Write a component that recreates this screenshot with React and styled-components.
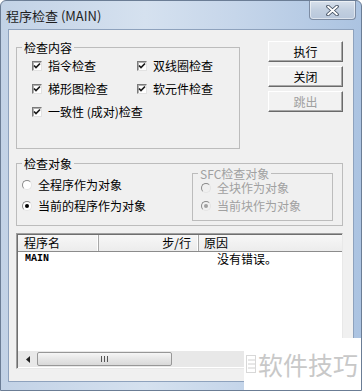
import React from 'react';
import styled, {createGlobalStyle} from 'styled-components';

const GlobalStyle = createGlobalStyle`
    html, body {
        margin: 0;
        padding: 0;
        background: #fff;
    }
    body {
        font-family: "Noto Sans CJK SC", "Liberation Sans", sans-serif;
        font-size: 12px;
        color: #000;
    }
    * {
        box-sizing: border-box;
    }
`;

const Window = styled.div`
    position: relative;
    width: 362px;
    height: 391px;
    display: flex;
    flex-direction: column;
    padding: 0 7px 8px 7px;
    border: 1px solid #6b7d95;
    border-radius: 6px 6px 0 0;
    background: linear-gradient(90deg, #c2d2e6 0%, #d5e1ef 40%, #c6d6ea 65%, #abc3e1 100%);
    overflow: hidden;
`;

const TitleBar = styled.div`
    height: 28px;
    margin: 0 -2px;
    display: flex;
    justify-content: space-between;
    align-items: flex-start;
    flex: none;
`;

const Title = styled.div`
    margin-top: 7px;
    font-size: 13px;
    line-height: 16px;
    color: #1e1e1e;
`;

const CloseButton = styled.div`
    width: 47px;
    height: 19px;
    display: flex;
    align-items: center;
    justify-content: center;
    border: 1px solid #7d8ca3;
    border-top: none;
    border-radius: 0 0 4px 4px;
    background: linear-gradient(#d8e1ec, #c2cfe0 50%, #b8c7db);
    box-shadow: inset 0 0 0 1px rgba(255, 255, 255, 0.5);
`;

const Client = styled.div`
    flex: 1;
    display: flex;
    flex-direction: column;
    background: #f0f0f0;
    border: 1px solid #8ea2bd;
    padding: 11px 10px 0 7px;
`;

const TopRow = styled.div`
    display: flex;
    justify-content: space-between;
    align-items: flex-start;
`;

const Group = styled.fieldset`
    margin: ${p => p.$margin || '0'};
    padding: 0;
    width: ${p => p.$width || 'auto'};
    height: ${p => p.$height};
    border: 1px solid #bcbcbc;
    color: ${p => (p.$disabled ? '#a0a0a0' : '#000')};
    min-width: 0;
`;

const Legend = styled.legend`
    margin-left: 5px;
    padding: 0 2px;
    font-size: 12px;
    line-height: 13px;
`;

const CheckGrid = styled.div`
    display: grid;
    grid-template-columns: 105px auto;
    grid-auto-rows: 23px;
    align-items: center;
    padding-left: 15px;
`;

const Option = styled.label`
    display: flex;
    align-items: center;
    gap: 6px;
    height: ${p => p.$height || '21px'};
    grid-column: ${p => (p.$wide ? '1 / -1' : 'auto')};
    line-height: 14px;
    white-space: nowrap;
`;

const CheckBox = styled.span`
    width: 10px;
    height: 10px;
    flex: none;
    display: flex;
    align-items: center;
    justify-content: center;
    background: #fff;
    border: 1px solid;
    border-color: #7a7a7a #e2e2e2 #e2e2e2 #7a7a7a;
    box-shadow: inset 1px 1px 0 #b0b0b0;
`;

const Radio = styled.span`
    width: 10px;
    height: 10px;
    flex: none;
    border-radius: 50%;
    background: ${p => (p.$disabled ? '#f0f0f0' : '#fff')};
    border: 1px solid;
    border-color: #8a8a8a #e4e4e4 #e4e4e4 #8a8a8a;
    display: flex;
    align-items: center;
    justify-content: center;

    &::after {
        content: '';
        display: ${p => (p.$on ? 'block' : 'none')};
        width: 4px;
        height: 4px;
        border-radius: 50%;
        background: ${p => (p.$disabled ? '#a0a0a0' : '#000')};
    }
`;

const ButtonCol = styled.div`
    width: 75px;
    display: flex;
    flex-direction: column;
    gap: 4px;
`;

const Button = styled.div`
    height: 21px;
    display: flex;
    align-items: center;
    justify-content: center;
    background: #f2f2f2;
    border: 1px solid;
    border-color: #fff #6a6a6a #6a6a6a #fff;
    box-shadow: inset -1px -1px 0 #a8a8a8;
    color: ${p => (p.$disabled ? '#a0a0a0' : '#000')};
    font-size: 12px;
    line-height: 14px;
`;

const TargetRow = styled.div`
    display: flex;
    justify-content: space-between;
    align-items: flex-start;
`;

const RadioCol = styled.div`
    padding: ${p => p.$padding};
    margin-top: ${p => p.$shift || '0'};
    display: flex;
    flex-direction: column;
`;

const List = styled.div`
    margin-top: 7px;
    height: 136px;
    display: flex;
    flex-direction: column;
    background: #fff;
    border: 1px solid;
    border-color: #a0a0a0 #e8e8e8 #e8e8e8 #a0a0a0;
    box-shadow: inset 1px 1px 0 #6f6f6f;
`;

const HeaderRow = styled.div`
    height: 17px;
    display: grid;
    grid-template-columns: 81px 100px 1fr;
    margin: 1px 0 0 1px;
    background: linear-gradient(#f7f7f7, #ececec);
    border-bottom: 1px solid #8c8c8c;
`;

const HeaderCell = styled.div`
    padding: ${p => p.$padding};
    text-align: ${p => p.$align || 'left'};
    border-right: ${p => (p.$last ? 'none' : '1px solid #a8a8a8')};
    box-shadow: ${p => (p.$last ? 'none' : 'inset -1px 0 0 #fff')};
    line-height: 15px;
`;

const Body = styled.div`
    flex: 1;
    margin-left: 1px;
`;

const Row = styled.div`
    height: 14px;
    display: grid;
    grid-template-columns: 81px 100px 1fr;
    align-items: center;
`;

const Cell = styled.div`
    padding-left: ${p => p.$pad || '0'};
    font-family: ${p => (p.$mono ? '"Liberation Mono", monospace' : 'inherit')};
    font-weight: ${p => (p.$mono ? 700 : 400)};
    font-size: ${p => (p.$mono ? '10px' : '12px')};
    line-height: 14px;
`;

const ScrollBar = styled.div`
    height: 16px;
    margin: 0 0 1px 1px;
    display: flex;
    background: #e8e8e8;
`;

const ScrollArrow = styled.div`
    width: 19px;
    display: flex;
    align-items: center;
    justify-content: center;
`;

const Thumb = styled.div`
    width: 135px;
    margin: 1px 0;
    display: flex;
    align-items: center;
    justify-content: center;
    border: 1px solid #979797;
    border-radius: 2px;
    background: linear-gradient(#f6f6f6, #e6e6e6 50%, #d9d9d9);
`;

const Watermark = styled.div`
    position: absolute;
    left: 243px;
    top: 337px;
    right: 0;
    bottom: 0;
    display: flex;
    align-items: center;
    gap: 2px;
    padding-left: 2px;
    background: #fff;
    color: #c8c8c8;
    font-size: 25px;
    line-height: 30px;
`;

const Check = () => (
    <CheckBox>
        <svg width="8" height="8" viewBox="0 0 8 8">
            <path d="M1 3.5 L3 5.5 L7 1.5" fill="none" stroke="#1a1a1a" strokeWidth="1.7"/>
        </svg>
    </CheckBox>
);

export default function App() {
    return (
        <>
            <GlobalStyle/>
            <Window>
                <TitleBar>
                    <Title>程序检查 (MAIN)</Title>
                    <CloseButton>
                        <svg width="13" height="11" viewBox="0 0 13 11">
                            <path d="M2 1.5 L11 9.5 M11 1.5 L2 9.5" stroke="#3d4a5c" strokeWidth="3.6" strokeLinecap="round"/>
                            <path d="M2 1.5 L11 9.5 M11 1.5 L2 9.5" stroke="#fff" strokeWidth="1.8" strokeLinecap="round"/>
                        </svg>
                    </CloseButton>
                </TitleBar>

                <Client>
                    <TopRow>
                        <Group $width="224px" $height="108px">
                            <Legend>检查内容</Legend>
                            <CheckGrid>
                                <Option $height="23px"><Check/>指令检查</Option>
                                <Option $height="23px"><Check/>双线圈检查</Option>
                                <Option $height="23px"><Check/>梯形图检查</Option>
                                <Option $height="23px"><Check/>软元件检查</Option>
                                <Option $height="23px" $wide><Check/>一致性 (成对)检查</Option>
                            </CheckGrid>
                        </Group>

                        <ButtonCol>
                            <Button>执行</Button>
                            <Button>关闭</Button>
                            <Button $disabled>跳出</Button>
                        </ButtonCol>
                    </TopRow>

                    <Group $height="69px" $margin="8px 0 0 0">
                        <Legend>检查对象</Legend>
                        <TargetRow>
                            <RadioCol $padding="4px 0 0 5px">
                                <Option><Radio/>全程序作为对象</Option>
                                <Option><Radio $on/>当前的程序作为对象</Option>
                            </RadioCol>

                            <Group $width="141px" $height="54px" $margin="-3px 9px 0 0" $disabled>
                                <Legend>SFC检查对象</Legend>
                                <RadioCol $padding="0 0 0 8px" $shift="-1px">
                                    <Option $height="18px"><Radio $disabled/>全块作为对象</Option>
                                    <Option $height="18px"><Radio $disabled $on/>当前块作为对象</Option>
                                </RadioCol>
                            </Group>
                        </TargetRow>
                    </Group>

                    <List>
                        <HeaderRow>
                            <HeaderCell $padding="0 0 0 6px">程序名</HeaderCell>
                            <HeaderCell $padding="0 7px 0 0" $align="right">步/行</HeaderCell>
                            <HeaderCell $padding="0 0 0 5px" $last>原因</HeaderCell>
                        </HeaderRow>
                        <Body>
                            <Row>
                                <Cell $pad="7px" $mono>MAIN</Cell>
                                <Cell/>
                                <Cell $pad="18px">没有错误。</Cell>
                            </Row>
                        </Body>
                        <ScrollBar>
                            <ScrollArrow>
                                <svg width="4" height="7" viewBox="0 0 4 7">
                                    <path d="M4 0 L0 3.5 L4 7 Z" fill="#222"/>
                                </svg>
                            </ScrollArrow>
                            <Thumb>
                                <svg width="7" height="6" viewBox="0 0 7 6">
                                    <path d="M0.5 0 V6 M3.5 0 V6 M6.5 0 V6" stroke="#555" strokeWidth="1"/>
                                </svg>
                            </Thumb>
                        </ScrollBar>
                    </List>
                </Client>

                <Watermark>
                    <svg width="10" height="18" viewBox="0 0 10 18">
                        <rect x="0.5" y="0.5" width="9" height="17" fill="none" stroke="#d8d8d8"/>
                        <path d="M2 5 H9 M2 9 H9 M2 13 H9" stroke="#d0d0d0"/>
                    </svg>
                    软件技巧
                </Watermark>
            </Window>
        </>
    );
}
